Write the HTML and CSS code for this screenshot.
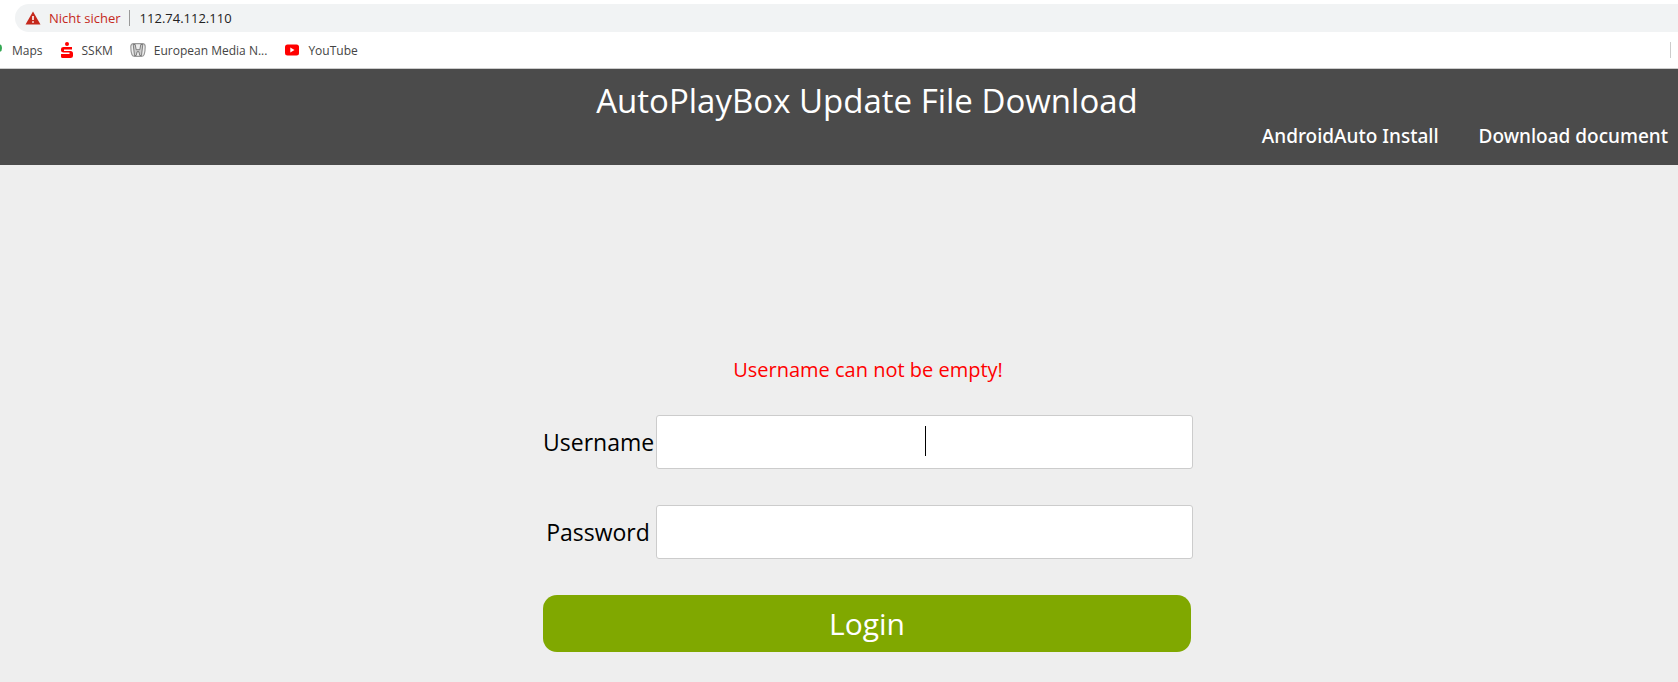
FILE: index.html
```
<!DOCTYPE html>
<html lang="en">
<head>
  <meta charset="UTF-8" />
  <title>AutoPlayBox Update File Download</title>
  <link rel="stylesheet" href="styles.css">
</head>
<body>
  <div class="browser">
    <div class="address-bar">
      <svg class="warning" viewBox="0 0 16 14" aria-hidden="true">
        <path d="M8 0.5 L15.5 13.5 H0.5 Z" fill="#c5281c"/>
        <path d="M7.2 5h1.6v4H7.2zM7.2 10.2h1.6v1.6H7.2z" fill="#fff"/>
      </svg>
      <button type="button" class="security">Nicht sicher</button>
      <input class="url" type="text" value="112.74.112.110" aria-label="Address">
    </div>
    <nav class="bookmarks">
      <a href="#" class="maps">
        <svg class="pin" viewBox="0 0 2 16" aria-hidden="true"><ellipse cx="-1" cy="6" rx="3" ry="4" fill="#34a853"/></svg>
        Maps
      </a>
      <a href="#" class="sskm">
        <svg width="14" height="16" viewBox="0 0 14 16" aria-hidden="true">
          <circle cx="7" cy="2" r="2" fill="#f00"/>
          <path d="M12 5H3.500Q1 5 1 7v1.500Q1 10.500 3.500 10.500H9.500v1.500H1v2.500Q1 16 2.500 16H10.500Q13 16 13 14v-2.500Q13 9 10.500 9H4V7.500h8z" fill="#f00"/>
        </svg>
        SSKM
      </a>
      <a href="#" class="honda">
        <svg width="16" height="14" viewBox="0 0 16 14" aria-hidden="true">
          <path d="M3.500 .7h9c1.600 0 2.700 1.200 2.700 3 0 3-.4 5.600-1 7.600-.4 1.300-1.200 2-2.600 2H4.400c-1.400 0-2.200-.7-2.600-2C1.200 9.300.8 6.700.8 3.700c0-1.800 1.100-3 2.700-3z" fill="#eee" stroke="#999" stroke-width="1.200"/>
          <path d="M3.200 1.500l1.300 11h1.700l.9-3.800h1.800l.9 3.800h1.700l1.300-11h-2l-1 5.200H6.200l-1-5.200z" fill="#ccc" stroke="#666" stroke-width=".8"/>
        </svg>
        European Media N...
      </a>
      <a href="#" class="youtube">
        <svg width="16" height="12" viewBox="0 0 16 12" aria-hidden="true">
          <rect x="1" y="0.500" width="14" height="11" rx="2.500" fill="#f00"/>
          <path d="M6.300 3.500v5l4.200-2.500z" fill="#fff"/>
        </svg>
        YouTube
      </a>
      <span class="divider"></span>
    </nav>
  </div>

  <header>
    <h1>AutoPlayBox Update File Download</h1>
    <nav class="links">
      <a href="#">AndroidAuto Install</a>
      <a href="#">Download document</a>
    </nav>
  </header>

  <main>
    <form class="login">
      <p class="error">Username can not be empty!</p>
      <div class="row">
        <label for="username">Username</label>
        <div class="field">
          <input type="text" id="username" name="username">
          <span class="caret"></span>
        </div>
      </div>
      <div class="row">
        <label for="password">Password</label>
        <div class="field">
          <input type="password" id="password" name="password">
        </div>
      </div>
      <button type="button" class="submit">Login</button>
    </form>
  </main>
</body>
</html>
```
FILE: styles.css
```
* {
  box-sizing: border-box;
}
body {
  margin: 0;
  min-height: 100vh;
  background: #eee;
  color: #000;
  font-family: "Open Sans", sans-serif;
}
a {
  color: inherit;
  text-decoration: none;
}

/* browser bar */
.browser {
  background: #fff;
  padding-top: 4px;
  border-bottom: 1px solid #ccc;
}
.address-bar {
  display: flex;
  align-items: center;
  height: 28px;
  margin-left: 15px;
  padding-left: 10px;
  background: #f1f3f4;
  border-radius: 14px 0 0 14px;
}
.warning {
  width: 16px;
  height: 14px;
}
.security {
  margin-left: 8px;
  padding: 0 8px 0 0;
  border: none;
  border-right: 1px solid #999;
  background: none;
  color: #c5281c;
  font: 13px/16px "Open Sans", sans-serif;
}
.url {
  flex: 1;
  padding: 0 0 0 10px;
  border: none;
  outline: none;
  background: none;
  color: #222;
  font: 13px/16px "Open Sans", sans-serif;
}
.bookmarks {
  display: flex;
  align-items: center;
  height: 36px;
  color: #444;
  font-size: 12px;
}
.bookmarks a {
  display: flex;
  align-items: center;
  gap: 8px;
  margin-right: 17px;
}
.bookmarks .maps {
  gap: 10px;
}
.pin {
  width: 2px;
  height: 16px;
}
.divider {
  width: 1px;
  height: 16px;
  margin: 0 7px 0 auto;
  background: #ccc;
}

/* page header */
header {
  height: 96px;
  padding: 9px 10px 0 0;
  background: #4b4b4b;
  color: #fff;
}
h1 {
  margin: 0;
  padding-left: 66px;
  font-size: 33px;
  font-weight: 400;
  line-height: 46px;
  text-align: center;
}
.links {
  display: flex;
  justify-content: flex-end;
  gap: 40px;
  font-family: "Noto Sans", sans-serif;
  font-size: 19px;
  font-weight: 500;
  line-height: 24px;
}

/* login form */
main {
  padding: 191px 0 28px 58px;
}
.login {
  display: flex;
  flex-direction: column;
  gap: 36px;
  width: 100%;
  max-width: 650px;
  margin: 0 auto;
}
.error {
  margin: 0 0 -5px;
  color: #f00;
  font-size: 20px;
  line-height: 28px;
  text-align: center;
}
.row {
  display: flex;
  align-items: center;
  gap: 3px;
}
label {
  width: 110px;
  font-size: 23px;
  text-align: center;
}
.field {
  position: relative;
  flex: 1;
}
.field input {
  display: block;
  width: 100%;
  height: 54px;
  border: 1px solid #ccc;
  border-radius: 3px;
  outline: none;
  background: #fff;
  font: 23px "Open Sans", sans-serif;
  text-align: center;
}
.caret {
  position: absolute;
  top: 11px;
  left: 50%;
  width: 1px;
  height: 30px;
  background: #000;
}
.submit {
  height: 57px;
  margin-right: 2px;
  border: none;
  border-radius: 14px;
  background: #80a800;
  color: #fff;
  font: 30px "Open Sans", sans-serif;
  cursor: pointer;
}
```
